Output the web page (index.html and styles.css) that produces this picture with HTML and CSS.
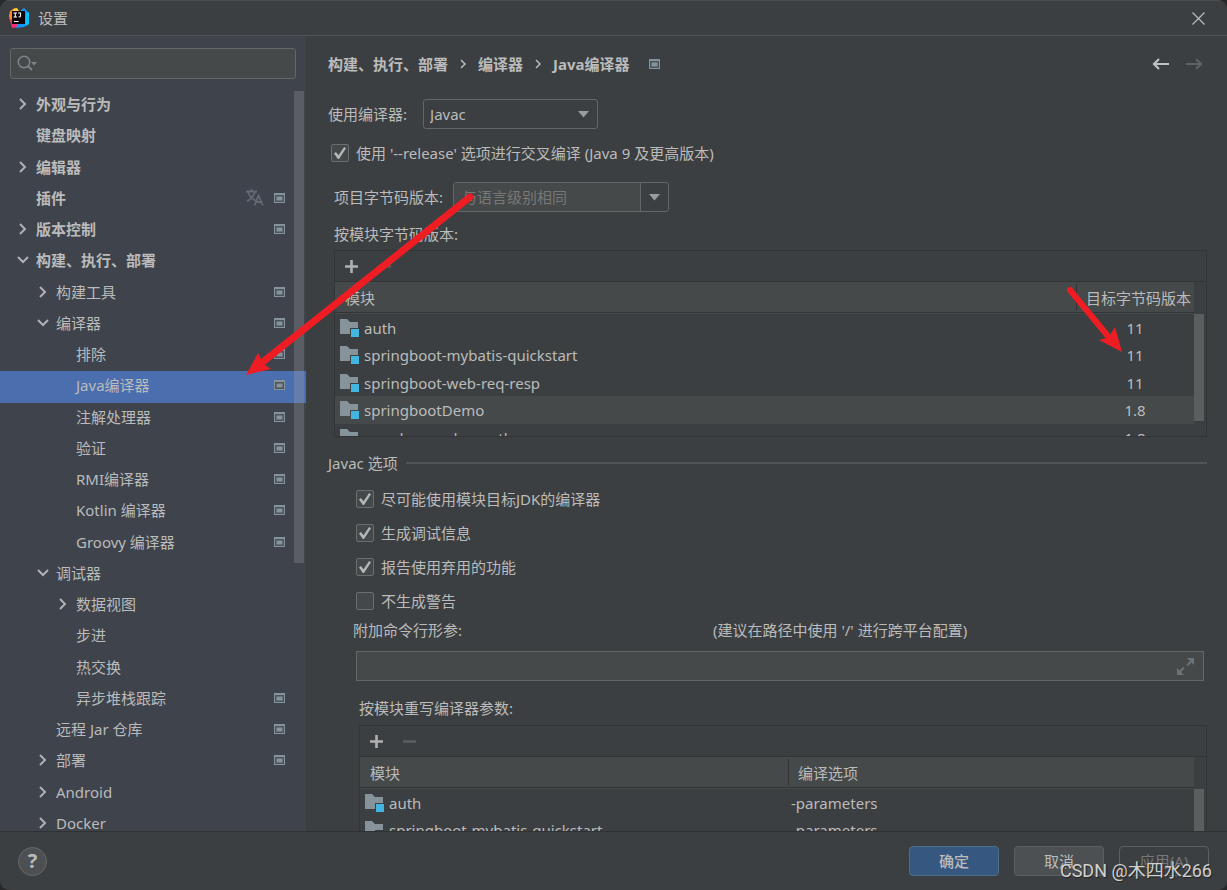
FILE: index.html
```html
<!DOCTYPE html>
<html lang="zh-CN">
<head>
<meta charset="utf-8">
<title>设置</title>
<link rel="stylesheet" href="styles.css">
</head>
<body>
<svg class="defs" aria-hidden="true">
  <symbol id="right" viewBox="0 0 16 16"><path d="M5 3l5 5-5 5" fill="none" stroke="#afb1b3" stroke-width="2"/></symbol>
  <symbol id="down" viewBox="0 0 16 16"><path d="M3 5l5 5 5-5" fill="none" stroke="#afb1b3" stroke-width="2"/></symbol>
  <symbol id="proj" viewBox="0 0 11 10"><path d="M0 0h11v10H0z" fill="#87939a"/><path d="M1 2h9v7H1z" fill="#4b535b"/><path d="M2.500 3.500h6v4h-6z" fill="#87939a"/></symbol>
  <symbol id="module" viewBox="0 0 19 18"><path d="M0 0h7l3 3h8v6h-8v6H0z" fill="#87939a"/><path d="M11 10h8v8h-8z" fill="#40b6e0"/></symbol>
  <symbol id="plus" viewBox="0 0 13 13"><path d="M6.500 0v13M0 6.500h13" stroke="#afb1b3" stroke-width="2.600"/></symbol>
  <symbol id="minus" viewBox="0 0 13 13"><path d="M0 6.500h13" stroke="#5c5e60" stroke-width="2.600"/></symbol>
  <symbol id="drop" viewBox="0 0 11 7"><path d="M0 0h11L5.500 6.500z" fill="#9a9da0"/></symbol>
</svg>
<div class="window">
  <header class="titlebar">
    <svg class="logo" width="20" height="20" viewBox="0 0 20 20"><path d="M1 3l5-3 4 5-5 11-4-3-1-5z" fill="#fc8c28"/><path d="M1 12l7-4 3 11-8 1z" fill="#fe2d74"/><path d="M4 1l4-1 4 6-6 1z" fill="#fdd03f"/><path d="M12 2l3-2 4 4 1 12-5 3-8 1 2-5z" fill="#1196f5"/><path d="M17 5l3-1v12l-4 2z" fill="#08c0fa"/><path d="M3 3h13v13H3z" fill="#100409"/><path d="M4.500 5h3.500M6.250 5v4M4.500 9h3.500M9 5h2.500v3q0 1-2 1M5 13.500h4.500" fill="none" stroke="#fff" stroke-width="1.100"/></svg>
    <h1 class="title">设置</h1>
    <button class="close" type="button" aria-label="关闭"><svg width="13" height="13" viewBox="0 0 13 13"><path d="M.5.5l12 12M12.500.5l-12 12" stroke="#b9bbbc" stroke-width="1.200"/></svg></button>
  </header>
  <div class="main">
    <nav class="sidebar">
      <label class="search">
        <svg width="21" height="17" viewBox="0 0 21 17"><circle cx="7" cy="7" r="5.700" fill="none" stroke="#7c868b" stroke-width="1.500"/><path d="M11 11l4 4" stroke="#7c868b" stroke-width="1.800"/><path d="M14 7h6l-3 3.500z" fill="#7c868b"/></svg>
        <input type="search" aria-label="搜索">
      </label>
      <div class="tree-view">
        <ul class="tree">
          <li class="top"><svg class="arrow"><use href="#right"/></svg><span>外观与行为</span></li>
          <li class="top"><i class="arrow"></i><span>键盘映射</span></li>
          <li class="top"><svg class="arrow"><use href="#right"/></svg><span>编辑器</span></li>
          <li class="top"><i class="arrow"></i><span>插件</span><svg class="lang" width="18" height="17" viewBox="0 0 18 17"><path d="M0 2.500h11M5.500 0v2.500M2 3q2 6 7.500 8.500M9 3Q7 9 1 12.500M8.500 16.500l4-10 4.500 10M10 13h5.500" fill="none" stroke="#626a72" stroke-width="1.800"/></svg><svg class="proj"><use href="#proj"/></svg></li>
          <li class="top"><svg class="arrow"><use href="#right"/></svg><span>版本控制</span><svg class="proj"><use href="#proj"/></svg></li>
          <li class="top"><svg class="arrow"><use href="#down"/></svg><span>构建、执行、部署</span></li>
          <li class="l1"><svg class="arrow"><use href="#right"/></svg><span>构建工具</span><svg class="proj"><use href="#proj"/></svg></li>
          <li class="l1"><svg class="arrow"><use href="#down"/></svg><span>编译器</span><svg class="proj"><use href="#proj"/></svg></li>
          <li class="l2"><i class="arrow"></i><span>排除</span><svg class="proj"><use href="#proj"/></svg></li>
          <li class="l2 selected"><i class="arrow"></i><span>Java编译器</span><svg class="proj"><use href="#proj"/></svg></li>
          <li class="l2"><i class="arrow"></i><span>注解处理器</span><svg class="proj"><use href="#proj"/></svg></li>
          <li class="l2"><i class="arrow"></i><span>验证</span><svg class="proj"><use href="#proj"/></svg></li>
          <li class="l2"><i class="arrow"></i><span>RMI编译器</span><svg class="proj"><use href="#proj"/></svg></li>
          <li class="l2"><i class="arrow"></i><span>Kotlin 编译器</span><svg class="proj"><use href="#proj"/></svg></li>
          <li class="l2"><i class="arrow"></i><span>Groovy 编译器</span><svg class="proj"><use href="#proj"/></svg></li>
          <li class="l1"><svg class="arrow"><use href="#down"/></svg><span>调试器</span></li>
          <li class="l2"><svg class="arrow"><use href="#right"/></svg><span>数据视图</span></li>
          <li class="l2"><i class="arrow"></i><span>步进</span></li>
          <li class="l2"><i class="arrow"></i><span>热交换</span></li>
          <li class="l2"><i class="arrow"></i><span>异步堆栈跟踪</span><svg class="proj"><use href="#proj"/></svg></li>
          <li class="l1"><i class="arrow"></i><span>远程 Jar 仓库</span><svg class="proj"><use href="#proj"/></svg></li>
          <li class="l1"><svg class="arrow"><use href="#right"/></svg><span>部署</span><svg class="proj"><use href="#proj"/></svg></li>
          <li class="l1"><svg class="arrow"><use href="#right"/></svg><span>Android</span></li>
          <li class="l1"><svg class="arrow"><use href="#right"/></svg><span>Docker</span></li>
        </ul>
        <div class="tree-scroll"></div>
      </div>
    </nav>
    <main class="content">
      <div class="crumbs">
        <span>构建、执行、部署</span><svg width="6" height="10" viewBox="0 0 6 10"><path d="M1 1l4 4-4 4" fill="none" stroke="#bbb" stroke-width="1.500"/></svg><span>编译器</span><svg width="6" height="10" viewBox="0 0 6 10"><path d="M1 1l4 4-4 4" fill="none" stroke="#bbb" stroke-width="1.500"/></svg><span>Java编译器</span><svg class="crumb-proj" width="11" height="10"><use href="#proj"/></svg>
        <div class="history">
          <button type="button" aria-label="后退"><svg width="17" height="12" viewBox="0 0 17 12"><path d="M17 6H2M7 1L2 6l5 5" fill="none" stroke="#bfc1c2" stroke-width="2.200"/></svg></button>
          <button type="button" aria-label="前进" disabled><svg width="17" height="12" viewBox="0 0 17 12"><path d="M0 6h15M10 1l5 5-5 5" fill="none" stroke="#5f6162" stroke-width="2.200"/></svg></button>
        </div>
      </div>
      <div class="row compiler">
        <label for="compiler">使用编译器:</label>
        <div class="select"><select id="compiler"><option>Javac</option></select><svg width="11" height="7"><use href="#drop"/></svg></div>
      </div>
      <label class="check release"><input type="checkbox" checked><span>使用 '--release' 选项进行交叉编译 (Java 9 及更高版本)</span></label>
      <div class="row bytecode">
        <label for="level">项目字节码版本:</label>
        <div class="combo"><input id="level" type="text" placeholder="与语言级别相同" disabled><button type="button" aria-label="展开"><svg width="11" height="7"><use href="#drop"/></svg></button></div>
      </div>
      <div class="caption">按模块字节码版本:</div>
      <section class="panel modules">
        <div class="toolbar"><button type="button" aria-label="添加"><svg width="13" height="13"><use href="#plus"/></svg></button><button type="button" aria-label="移除" disabled><svg width="13" height="13"><use href="#minus"/></svg></button></div>
        <div class="grid">
          <table>
            <colgroup><col><col class="target"></colgroup>
            <thead><tr><th>模块</th><th>目标字节码版本</th></tr></thead>
            <tbody>
              <tr><td><div class="mod"><svg><use href="#module"/></svg>auth</div></td><td>11</td></tr>
              <tr><td><div class="mod"><svg><use href="#module"/></svg>springboot-mybatis-quickstart</div></td><td>11</td></tr>
              <tr><td><div class="mod"><svg><use href="#module"/></svg>springboot-web-req-resp</div></td><td>11</td></tr>
              <tr class="hover"><td><div class="mod"><svg><use href="#module"/></svg>springbootDemo</div></td><td>1.8</td></tr>
              <tr><td><div class="mod"><svg><use href="#module"/></svg>vue-demo-edu-oauth</div></td><td>1.8</td></tr>
            </tbody>
          </table>
          <div class="track"><div class="thumb"></div></div>
        </div>
      </section>
      <h2 class="group">Javac 选项</h2>
      <div class="checks">
        <label class="check"><input type="checkbox" checked><span>尽可能使用模块目标JDK的编译器</span></label>
        <label class="check"><input type="checkbox" checked><span>生成调试信息</span></label>
        <label class="check"><input type="checkbox" checked><span>报告使用弃用的功能</span></label>
        <label class="check"><input type="checkbox"><span>不生成警告</span></label>
      </div>
      <div class="args-head"><label for="args">附加命令行形参:</label><span>(建议在路径中使用 '/' 进行跨平台配置)</span></div>
      <div class="args"><input id="args" type="text"><svg width="17" height="17" viewBox="0 0 17 17"><path d="M10 0h7v7l-2.500-2.500L11 8 9.500 6.500 13 3zM7 17H0v-7l2.500 2.500L6 9l1.500 1.500L4 14z" fill="#6a7378"/></svg></div>
      <div class="caption params-caption">按模块重写编译器参数:</div>
      <section class="panel params">
        <div class="toolbar"><button type="button" aria-label="添加"><svg width="13" height="13"><use href="#plus"/></svg></button><button type="button" aria-label="移除" disabled><svg width="13" height="13"><use href="#minus"/></svg></button></div>
        <div class="grid">
          <table>
            <colgroup><col><col class="options"></colgroup>
            <thead><tr><th>模块</th><th>编译选项</th></tr></thead>
            <tbody>
              <tr><td><div class="mod"><svg><use href="#module"/></svg>auth</div></td><td>-parameters</td></tr>
              <tr><td><div class="mod"><svg><use href="#module"/></svg>springboot-mybatis-quickstart</div></td><td>-parameters</td></tr>
            </tbody>
          </table>
          <div class="track"><div class="thumb"></div></div>
        </div>
      </section>
    </main>
  </div>
  <footer class="footer">
    <button class="help" type="button">?</button>
    <button class="btn primary" type="button">确定</button>
    <button class="btn" type="button">取消</button>
    <button class="btn" type="button" disabled>应用(A)</button>
  </footer>
  <svg class="marks" width="1227" height="440" viewBox="0 0 1227 440" aria-hidden="true">
    <g fill="#ee1d24" stroke="#ee1d24"><path d="M470 197L264 361" stroke-width="7" stroke-linecap="round"/><path d="M246 375l12-22 4 8 3 4 6 4z" stroke="none"/><path d="M1070 290l37 45" stroke-width="6" stroke-linecap="round"/><path d="M1122 352l-7-25-5 8-4 3-7 2z" stroke="none"/></g>
  </svg>
  <div class="watermark">CSDN @木四水266</div>
</div>
</body>
</html>
```
FILE: styles.css
```css
* { box-sizing: border-box; }
body { margin: 0; background: #26282a; color: #bbb; font: 15px/20px "Noto Sans", "Noto Sans CJK SC", sans-serif; }
button, input, select { font: inherit; color: inherit; }
button { padding: 0; border: 0; background: none; }
svg { display: block; flex: none; }
.defs { position: absolute; width: 0; height: 0; }
.window { position: relative; display: grid; grid-template-rows: auto minmax(0, 1fr) auto; height: 100vh; overflow: hidden; border-radius: 9px; background: #3c3f41; }

.titlebar { display: flex; align-items: center; gap: 9px; height: 36px; padding: 0 22px 0 9px; border-top: 1px solid #4a4d4f; border-bottom: 1px solid #515355; }
.title { flex: 1; margin: 0; font-size: 15px; font-weight: 400; }

.main { display: flex; min-height: 0; overflow: hidden; }
.sidebar { display: flex; flex-direction: column; flex: none; width: 306px; background: #3e434c; }
.search { display: flex; align-items: center; flex: none; height: 31px; margin: 12px 10px 11px; padding-left: 6px; border: 1px solid #646668; border-radius: 3px; background: #45494a; }
.search input { flex: 1; min-width: 0; border: 0; background: none; outline: 0; }
.tree-view { position: relative; flex: 1; min-height: 0; overflow: hidden; }
.tree { display: grid; grid-auto-rows: 1fr; height: 750px; margin: 0; padding: 0; list-style: none; }
.tree li { display: flex; align-items: center; padding: 0 21px 3px 15px; }
.tree span { flex: 1; margin-left: 5px; white-space: nowrap; }
.tree .top span { font-weight: 700; }
.tree .l1 { padding-left: 35px; }
.tree .l2 { padding-left: 55px; }
.tree .selected { background: #4b6eaf; }
.arrow { width: 16px; height: 16px; }
.proj { width: 11px; height: 10px; }
.lang { margin-right: 10px; }
.tree-scroll { position: absolute; top: 1px; right: 2px; width: 10px; height: 472px; background: rgba(166, 166, 166, 0.28); }

.content { flex: 1; min-width: 0; padding: 0 20px 0 22px; overflow: hidden; }
.crumbs { display: flex; align-items: center; height: 56px; gap: 12px; font-weight: 700; }
.crumb-proj { margin-left: 7px; }
.history { display: flex; gap: 17px; margin-left: auto; padding-right: 4px; }
.row { display: flex; align-items: center; height: 30px; }
.compiler { gap: 16px; margin-top: 7px; }
.select { display: grid; align-items: center; width: 175px; height: 30px; border: 1px solid #646668; border-radius: 3px; }
.select select { grid-area: 1 / 1; width: 100%; height: 28px; padding: 0 6px; border: 0; appearance: none; background: none; }
.select svg { grid-area: 1 / 1; justify-self: end; margin-right: 8px; pointer-events: none; }
.check { display: flex; align-items: center; gap: 7px; height: 34px; }
.check input { appearance: none; flex: none; display: grid; place-items: center; width: 18px; height: 18px; margin: 0; border: 1px solid #6b6d6e; border-radius: 2px; background: #43494a; }
.check input:checked::before { content: ""; width: 12px; height: 12px; background: #b4b6b7; clip-path: polygon(0 55%, 16% 42%, 38% 68%, 84% 0, 100% 10%, 42% 100%, 32% 100%); }
.release { margin: 7px 0 12px 3px; }
.bytecode { gap: 10px; padding-left: 6px; }
.combo { display: flex; width: 216px; height: 30px; border: 1px solid #646668; border-radius: 3px; }
.combo input { flex: 1; min-width: 0; padding: 0 8px; border: 0; background: #45494a; }
.combo input::placeholder { color: #777; opacity: 1; }
.combo button { display: grid; place-items: center; width: 28px; border-left: 1px solid #646668; }
.caption { margin: 12px 0 6px 6px; }

.panel { overflow: hidden; border: 1px solid #323435; }
.modules { height: 187px; margin-left: 6px; }
.toolbar { display: flex; align-items: center; gap: 20px; height: 31px; padding-left: 10px; border-bottom: 1px solid #323435; }
.grid { display: flex; align-items: flex-start; }
table { flex: 1; min-width: 0; table-layout: fixed; border-collapse: separate; border-spacing: 0; }
.target { width: 118px; }
.options { width: 406px; }
th { height: 32px; padding: 0 0 0 10px; border-bottom: 1px solid #45494a; background: #45494a; font-weight: 400; text-align: left; white-space: nowrap; box-shadow: inset 0 -1px #323435; }
th + th { background: linear-gradient(#323435, #323435) 0 2px / 1px 27px no-repeat #45494a; }
td { height: 28px; padding: 0 3px; line-height: 20px; }
tr:nth-child(odd) td { height: 27px; }
.modules td + td { text-align: center; }
.hover { background: #45494a; }
.mod { display: flex; align-items: center; gap: 5px; padding-left: 2px; }
.mod svg { width: 19px; height: 18px; }
.track { width: 12px; padding-top: 32px; }
.thumb { width: 10px; height: 107px; background: #5b5e5f; }

.group { display: flex; align-items: center; gap: 8px; margin: 16px 0 9px; font-size: 15px; font-weight: 400; }
.group::after { content: ""; flex: 1; height: 2px; background: #515355; }
.checks { margin-left: 28px; }
.args-head { display: grid; grid-template-columns: 360px 1fr; margin: 2px 0 11px 25px; }
.args { display: flex; align-items: center; height: 30px; margin: 0 3px 0 28px; padding-right: 9px; border: 1px solid #646668; background: #45494a; }
.args input { flex: 1; min-width: 0; border: 0; outline: 0; background: none; }
.params-caption { margin: 17px 0 7px 31px; }
.params { margin-left: 31px; }

.footer { display: flex; align-items: center; gap: 15px; height: 59px; padding: 0 18px; border-top: 1px solid #2f3132; }
.help { width: 29px; height: 29px; margin-right: auto; border: 1px solid #666869; border-radius: 50%; background: #4c5052; font-size: 20px; font-weight: 700; line-height: 26px; }
.btn { width: 90px; height: 30px; border: 1px solid #5e6060; border-radius: 4px; background: #4c5052; }
.primary { border-color: #4c708c; background: #365880; font-weight: 500; }
.btn:disabled { background: none; color: #777; }

.marks { position: absolute; top: 0; left: 0; pointer-events: none; }
.watermark { position: absolute; right: 15px; bottom: 7px; color: #d0d1d1; font: 18px/24px Roboto, "Noto Sans CJK SC", sans-serif; text-shadow: 1px 1px 1px #222; }
```
